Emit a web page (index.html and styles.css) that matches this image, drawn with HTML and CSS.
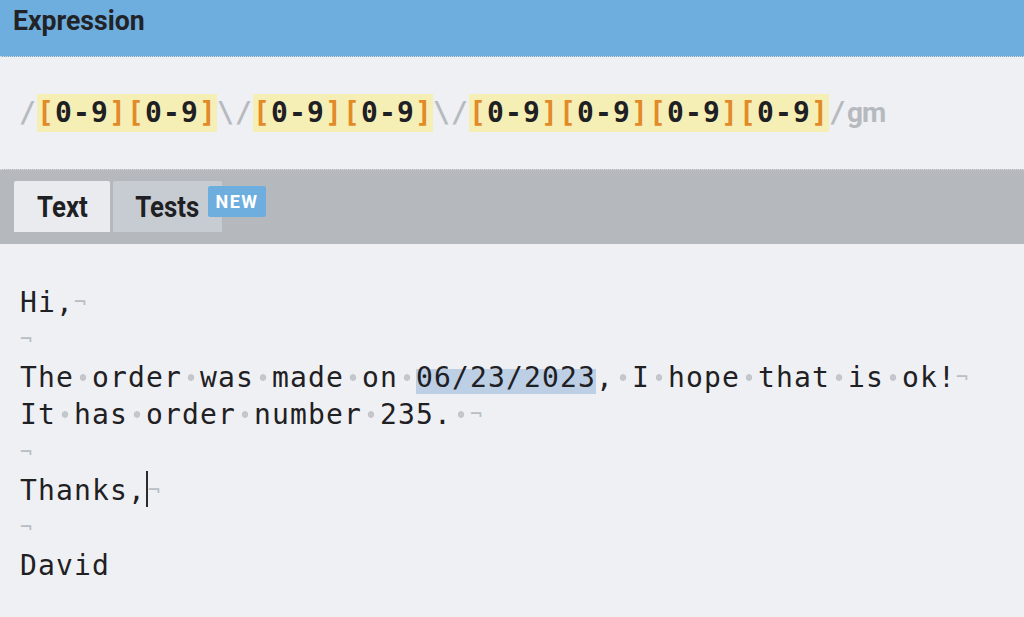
FILE: index.html
```html
<!DOCTYPE html>
<html lang="en">
<head>
<meta charset="utf-8">
<title>Expression</title>
<link rel="stylesheet" href="styles.css">
</head>
<body>
<header class="title-bar"><h1 class="title">Expression</h1></header>
<section class="expr">
  <div class="regex"><span class="delim">/</span><span class="grp"><span class="br">[</span>0-9<span class="br">]</span><span class="br">[</span>0-9<span class="br">]</span></span><span class="delim">\/</span><span class="grp"><span class="br">[</span>0-9<span class="br">]</span><span class="br">[</span>0-9<span class="br">]</span></span><span class="delim">\/</span><span class="grp"><span class="br">[</span>0-9<span class="br">]</span><span class="br">[</span>0-9<span class="br">]</span><span class="br">[</span>0-9<span class="br">]</span><span class="br">[</span>0-9<span class="br">]</span></span><span class="delim">/</span><span class="flags">gm</span></div>
</section>
<nav class="tabs">
  <div class="tab active"><span class="tab-label">Text</span></div>
  <div class="tab"><span class="tab-label">Tests</span><span class="badge">NEW</span></div>
</nav>
<main class="editor">
<pre class="text">Hi,<span class="nl">¬</span>
<span class="nl">¬</span>
The<span class="s"> </span>order<span class="s"> </span>was<span class="s"> </span>made<span class="s"> </span>on<span class="s"> </span><span class="hl">06/23/2023</span>,<span class="s"> </span>I<span class="s"> </span>hope<span class="s"> </span>that<span class="s"> </span>is<span class="s"> </span>ok!<span class="nl">¬</span>
It<span class="s"> </span>has<span class="s"> </span>order<span class="s"> </span>number<span class="s"> </span>235.<span class="s"> </span><span class="nl">¬</span>
<span class="nl">¬</span>
Thanks,<span class="caret"></span><span class="nl">¬</span>
<span class="nl">¬</span>
David</pre>
</main>
</body>
</html>
```
FILE: styles.css
```css
html, body {
  margin: 0;
  padding: 0;
  background: #eff0f3;
  height: 100%;
  overflow: hidden;
}

.title-bar {
  height: 57px;
  background: #6eaedf;
  border-bottom: 1px dotted #d9d6cf;
  padding-left: 13px;
  box-sizing: border-box;
}

.title {
  margin: 0;
  display: inline-block;
  font-family: Roboto, "Liberation Sans", sans-serif;
  font-weight: 700;
  font-size: 28px;
  line-height: 42px;
  color: #222326;
  transform: scaleX(0.95);
  transform-origin: left center;
}

.expr {
  height: 112px;
  display: flex;
  align-items: center;
  padding-left: 19px;
  box-sizing: border-box;
}

.regex {
  font-family: "DejaVu Sans Mono", monospace;
  font-weight: 700;
  font-size: 28px;
  letter-spacing: 1.14px;
  line-height: 38px;
  color: #1f2023;
  white-space: pre;
}

.delim {
  color: #b6babf;
}

.grp {
  display: inline-block;
  line-height: 38px;
  background: #f5efb6;
}

.br {
  color: #e38a28;
}

.flags {
  font-family: Roboto, "Liberation Sans", sans-serif;
  font-weight: 700;
  letter-spacing: -1px;
  color: #b6babf;
}

.tabs {
  height: 75px;
  background: #b5b8bd;
  border-top: 1px dotted #d5d7da;
  box-sizing: border-box;
  padding: 11px 14px 0;
  display: flex;
  gap: 3px;
  align-items: flex-start;
}

.tab {
  position: relative;
  height: 51px;
  display: flex;
  align-items: center;
  justify-content: center;
  background: #c7ccd3;
  border-radius: 2px 2px 0 0;
  box-sizing: border-box;
  width: 109px;
}

.tab.active {
  background: #e9ebee;
  width: 96px;
}

.tab-label {
  display: inline-block;
  font-family: Roboto, "Liberation Sans", sans-serif;
  font-weight: 700;
  font-size: 30px;
  color: #1f2023;
  transform: scaleX(0.86);
}

.badge {
  position: absolute;
  left: 95px;
  top: 5px;
  width: 58px;
  height: 31px;
  background: #6eaedf;
  color: #ffffff;
  font-family: Roboto, "Liberation Sans", sans-serif;
  font-weight: 700;
  font-size: 18px;
  letter-spacing: 1.5px;
  display: flex;
  align-items: center;
  justify-content: center;
  border-radius: 2px;
}

.editor {
  padding: 40px 20px 0;
}

.text {
  margin: 0;
  font-family: "DejaVu Sans Mono", monospace;
  font-size: 28px;
  letter-spacing: 1.14px;
  line-height: 37.4px;
  color: #1f2023;
}

.s {
  background: radial-gradient(circle at 50% 50%, #c3c7cc 0, #c3c7cc 3px, transparent 3.6px);
}

.nl {
  color: #b9bdc4;
  font-size: 20px;
  vertical-align: 3px;
}

.hl {
  background: linear-gradient(#bccfe4, #bccfe4) no-repeat left bottom / 100% 25px;
}

.caret {
  display: inline-block;
  width: 2px;
  height: 36px;
  background: #2a2b2e;
  vertical-align: -7px;
}
```
